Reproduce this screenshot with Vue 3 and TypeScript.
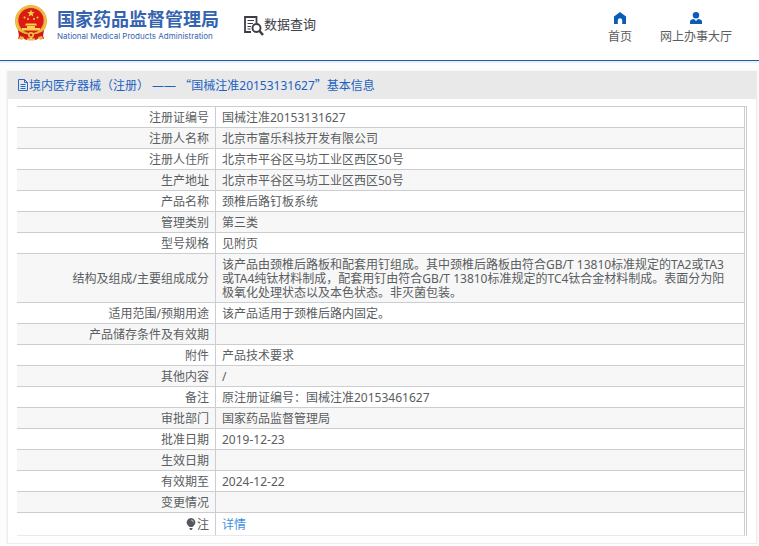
<script setup lang="ts">
interface Row {
  label: string
  value: string
}

const rows: Row[] = [
  { label: '注册证编号', value: '国械注准20153131627' },
  { label: '注册人名称', value: '北京市富乐科技开发有限公司' },
  { label: '注册人住所', value: '北京市平谷区马坊工业区西区50号' },
  { label: '生产地址', value: '北京市平谷区马坊工业区西区50号' },
  { label: '产品名称', value: '颈椎后路钉板系统' },
  { label: '管理类别', value: '第三类' },
  { label: '型号规格', value: '见附页' },
  {
    label: '结构及组成/主要组成成分',
    value:
      '该产品由颈椎后路板和配套用钉组成。其中颈椎后路板由符合GB/T 13810标准规定的TA2或TA3或TA4纯钛材料制成，配套用钉由符合GB/T 13810标准规定的TC4钛合金材料制成。表面分为阳极氧化处理状态以及本色状态。非灭菌包装。',
  },
  { label: '适用范围/预期用途', value: '该产品适用于颈椎后路内固定。' },
  { label: '产品储存条件及有效期', value: '' },
  { label: '附件', value: '产品技术要求' },
  { label: '其他内容', value: '/' },
  { label: '备注', value: '原注册证编号：国械注准20153461627' },
  { label: '审批部门', value: '国家药品监督管理局' },
  { label: '批准日期', value: '2019-12-23' },
  { label: '生效日期', value: '' },
  { label: '有效期至', value: '2024-12-22' },
  { label: '变更情况', value: '' },
]
</script>

<template>
  <div class="page">
    <header class="header">
      <a class="brand" href="#">
        <svg class="emblem" viewBox="0 0 32 36" aria-hidden="true">
          <path d="M5 27 3 34l5-1 3 2 5-2 5 2 3-2 5 1-2-7z" fill="#d81e17" />
          <circle cx="16" cy="16" r="16" fill="#e9b23c" />
          <circle cx="16" cy="16" r="14.6" fill="none" stroke="#f5cf62" stroke-width="1" stroke-dasharray="2 1.5" />
          <circle cx="16" cy="15.5" r="12.6" fill="#dc1a14" />
          <path d="m16 4.500 1 2.600h2.800l-2.200 1.700.8 2.700-2.400-1.600-2.400 1.600.8-2.700-2.200-1.700H15z" fill="#fbd34c" />
          <g fill="#fbd34c">
            <circle cx="9.5" cy="12.5" r="1" />
            <circle cx="22.5" cy="12.5" r="1" />
            <circle cx="13" cy="14" r="1" />
            <circle cx="19" cy="14" r="1" />
            <path d="M11 18.500h10l1 2H10zM12 21h8v2h5v2.500H7V23h5z" />
          </g>
          <path d="M3 25c3 3 8 4 10 4.500a3.300 3.300 0 0 1 6 0c2-.5 7-1.500 10-4.500l-1 6c-4-1-6 0-8 1.500h-8C10 31 8 30 4 31z" fill="#cf1812" />
          <circle cx="16" cy="30" r="3" fill="#f0bd45" />
          <circle cx="16" cy="30" r="1.3" fill="#dc1a14" />
          <path d="m5 31 4 1-2 3-3-1zm22 0-4 1 2 3 3-1zM12 33l4 1 4-1-1 2.500h-6z" fill="#efb83f" />
        </svg>
        <span class="brand-text">
          <strong class="brand-cn">国家药品监督管理局</strong>
          <span class="brand-en">National Medical Products Administration</span>
        </span>
      </a>
      <a class="query" href="#">
        <svg class="query-icon" viewBox="0 0 20 20" fill="none" stroke="#3d3d46" aria-hidden="true">
          <path d="M7 16H1V1h11.500v6" stroke-width="1.8" />
          <path d="M3.500 4.500H10M3.500 7.500H9M3.500 10.500H7M3.500 13H6.500" stroke-width="1.2" />
          <circle cx="12.5" cy="12" r="4" stroke-width="1.9" />
          <path d="m15.500 15 3.500 4" stroke-width="2.6" />
        </svg>
        <span>数据查询</span>
      </a>
      <nav class="nav">
        <a class="nav-link" href="#">
          <svg class="nav-icon" viewBox="0 0 14 12" aria-hidden="true">
            <path d="M7 0 1 4.500V12h3.800V8.500a2.200 2.200 0 0 1 4.400 0V12H13V4.500z" fill="#0b5cb8" />
          </svg>
          <span>首页</span>
        </a>
        <a class="nav-link" href="#">
          <svg class="nav-icon" viewBox="0 0 14 12" aria-hidden="true">
            <circle cx="7" cy="3.2" r="3.2" fill="#0b5cb8" />
            <path d="M1 12V9.500C1 8 3 7 5 7l2 2 2-2c2 0 4 1 4 2.500V12z" fill="#0b5cb8" />
          </svg>
          <span>网上办事大厅</span>
        </a>
      </nav>
    </header>

    <main class="panel">
      <h1 class="title">
        <svg class="title-icon" viewBox="0 0 10 12" fill="none" stroke="#2a68c4" aria-hidden="true">
          <path d="M.5.5h6l3 3v8h-9zM6.500.5v3h3M2.500 5.500h5M2.500 7.500h5M2.500 9.500h5" />
        </svg>
        <span>境内医疗器械（注册） —— <span class="quote">“</span>国械注准20153131627<span class="quote">”</span>基本信息</span>
      </h1>
      <div class="content">
        <table class="details">
          <tbody>
            <tr v-for="row in rows" :key="row.label">
              <th scope="row">{{ row.label }}</th>
              <td>{{ row.value }}</td>
            </tr>
            <tr class="note">
              <th scope="row">
                <svg class="bulb" viewBox="0 0 10 12" aria-hidden="true">
                  <path d="M5 0a4.300 4.300 0 0 0-3 7.400L3.500 9h3L8 7.400A4.300 4.300 0 0 0 5 0zM3.500 10h3v1l-1 1h-1l-1-1z" fill="#55585c" />
                  <path d="M5 2a2.300 2.300 0 0 1 2.300 2.300" fill="none" stroke="#ddd" stroke-width=".8" />
                </svg>注
              </th>
              <td><a href="#">详情</a></td>
            </tr>
          </tbody>
        </table>
      </div>
    </main>
  </div>
</template>

<style>
body {
  background: #fdfdfd;
}
</style>

<style scoped>
.page {
  font: 12px/14px "Noto Sans", "Noto Sans CJK SC", sans-serif;
  color: #5a5d61;
}
a {
  color: inherit;
  text-decoration: none;
}
.header {
  display: flex;
  align-items: flex-start;
  height: 60px;
  padding: 0 27px 0 15px;
  background: #fff;
  border-bottom: 1px solid #20579c;
  box-shadow: 0 2px 0 #e6f1f9;
}
.brand {
  display: flex;
  gap: 10px;
  padding-top: 5px;
}
.emblem {
  width: 32px;
  height: 36px;
}
.brand-text {
  display: flex;
  flex-direction: column;
  padding-top: 3px;
  color: #3563b0;
  white-space: nowrap;
}
.brand-cn {
  font-size: 18px;
  line-height: 22px;
}
.brand-en {
  font: 8px/12px Inter, sans-serif;
}
.query {
  display: flex;
  margin-left: 25px;
  padding-top: 14px;
  font-size: 13px;
  line-height: 20px;
  color: #3d3d46;
  white-space: nowrap;
}
.query-icon {
  width: 20px;
  height: 20px;
  padding-top: 2px;
}
.nav {
  display: flex;
  gap: 28px;
  margin-left: auto;
  padding-top: 12px;
}
.nav-link {
  display: flex;
  flex-direction: column;
  align-items: center;
  gap: 6px;
  white-space: nowrap;
}
.nav-icon {
  width: 14px;
  height: 12px;
}
.panel {
  margin: 10px 2px 0 7px;
  background: #fff;
  border: 1px solid #ececec;
  border-top: 0;
  box-shadow: 0 0 3px #f0f0f0;
}
.title {
  display: flex;
  align-items: center;
  gap: 1px;
  height: 28px;
  margin: 0;
  padding: 0 10px;
  background: #e9e9e9;
  color: #1b62c2;
  font-size: 12px;
  font-weight: 400;
}
.title-icon {
  width: 10px;
  height: 12px;
}
.quote {
  font-family: "Noto Sans CJK SC", sans-serif;
}
.content {
  padding: 7px 9px;
}
.details {
  width: 100%;
  padding-right: 1px;
  border-collapse: separate;
  border-spacing: 0;
  border-top: 1px solid #cbcdcf;
  border-right: 1px solid #cbcdcf;
  table-layout: fixed;
}
.details th,
.details td {
  height: 14px;
  padding: 4px 6px 2px;
  border-right: 1px solid #cbcdcf;
  border-bottom: 1px solid #cbcdcf;
  font-weight: 400;
  line-height: 14px;
  vertical-align: middle;
}
.details th {
  width: 186px;
  text-align: right;
}
.details td {
  padding-right: 12px;
  text-align: left;
}
.details tr:nth-child(even) {
  background: #f7f7f7;
}
.details .note th,
.details .note td {
  height: 16px;
  border-bottom-color: #e9e9e9;
}
.note a {
  color: #3f8fe0;
}
.bulb {
  width: 10px;
  height: 12px;
  margin-right: 1px;
  vertical-align: -1px;
}
</style>
